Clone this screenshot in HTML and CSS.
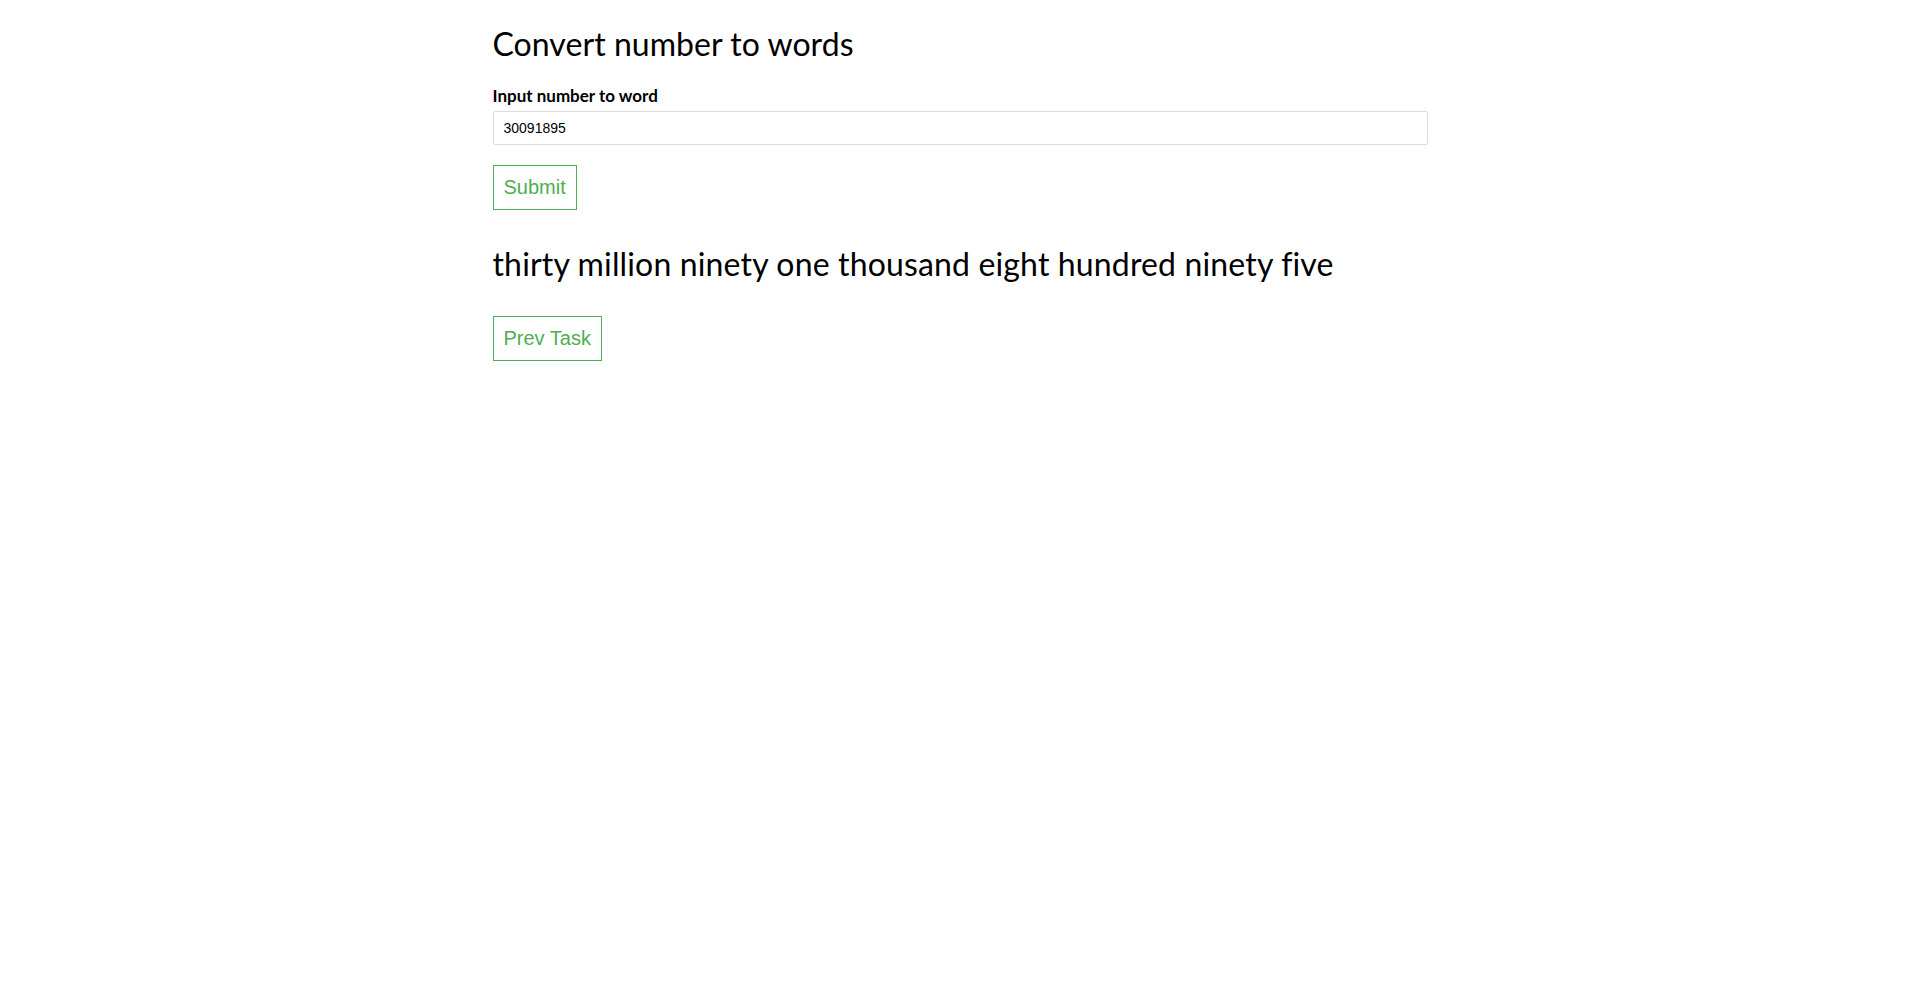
FILE: index.html
```html
<!DOCTYPE html>
<html lang="en">
<head>
<meta charset="utf-8">
<title>Convert number to words</title>
<link rel="stylesheet" href="styles.css">
</head>
<body>
<main class="container">
  <h1 class="title">Convert number to words</h1>
  <form class="form" onsubmit="return false">
    <label class="label" for="num">Input number to word</label>
    <input class="input" id="num" type="text" value="30091895">
    <button class="btn" type="submit">Submit</button>
  </form>
  <h2 class="result">thirty million ninety one thousand eight hundred ninety five</h2>
  <button class="btn btn-prev" type="button">Prev Task</button>
</main>
</body>
</html>
```
FILE: styles.css
```css
html, body {
  margin: 0;
  padding: 0;
  background: #fff;
}
body {
  font-family: Lato, "Open Sans", sans-serif;
  color: #000;
}
.container {
  width: 935px;
  margin: 0 auto;
  display: flex;
  flex-direction: column;
  align-items: flex-start;
}
.title {
  margin: 24px 0 0;
  font-size: 32px;
  line-height: 40px;
  font-weight: 400;
  letter-spacing: 0.05px;
}
.form {
  display: flex;
  flex-direction: column;
  align-items: flex-start;
  align-self: stretch;
}
.label {
  margin-top: 22px;
  font-size: 17px;
  line-height: 20px;
  font-weight: 700;
}
.input {
  box-sizing: border-box;
  align-self: stretch;
  margin-top: 5px;
  height: 34px;
  padding: 0 10px;
  border: 1px solid #dcdcdc;
  border-radius: 2px;
  font-family: "Liberation Sans", Arial, sans-serif;
  font-size: 14px;
  color: #000;
  outline: none;
}
.btn {
  margin-top: 20px;
  padding: 10px;
  border: 1px solid #4caf50;
  background: #fff;
  color: #4caf50;
  font-family: "Liberation Sans", Arial, sans-serif;
  font-size: 20px;
  line-height: 23px;
  border-radius: 0;
  cursor: pointer;
}
.result {
  margin: 34px 0 0;
  font-size: 32px;
  line-height: 40px;
  font-weight: 400;
  letter-spacing: 0.15px;
}
.btn-prev {
  margin-top: 32px;
}
```
